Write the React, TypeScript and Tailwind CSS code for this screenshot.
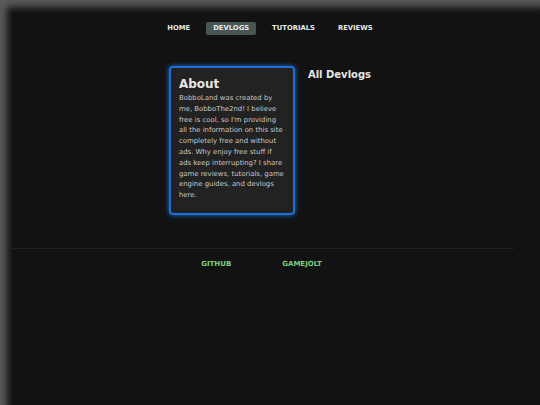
import React from "react";

const navItems = ["HOME", "DEVLOGS", "TUTORIALS", "REVIEWS"];

const App = () => {
  return (
    <div className="min-h-[405px] bg-[#121212] shadow-[inset_7px_7px_7px_#5a5a5a] font-['DejaVu_Sans',sans-serif] text-[#e6e6e6]">
      <nav className="flex justify-center items-center gap-[9px] pt-[22px]">
        {navItems.map((item) => (
          <a
            key={item}
            className={
              item === "DEVLOGS"
                ? "px-[7px] py-[3px] leading-[7px] rounded-[2px] bg-[#475655] text-[6.8px] font-bold text-[#e8e8e8]"
                : "px-[7px] py-[3px] leading-[7px] text-[6.8px] font-bold text-[#e8e8e8]"
            }
          >
            {item}
          </a>
        ))}
      </nav>

      <main className="flex justify-center items-start gap-[13px] mt-[31px]">
        <aside className="w-[126px] bg-[#222222] border-2 border-[#1f6fd6] rounded-[4px] shadow-[0_0_5px_#1f6fd6] px-[8px] pt-[9px] pb-[12px]">
          <h2 className="text-[12px] font-bold leading-[15px] text-[#e6e6e6]">About</h2>
          <p className="mt-[1px] text-[6.9px] leading-[10.8px] text-[#c8c8c8]">
            BobboLand was created by me, BobboThe2nd! I believe free is cool, so I'm providing all the
            information on this site completely free and without ads. Why enjoy free stuff if ads keep
            interrupting? I share game reviews, tutorials, game engine guides, and devlogs here.
          </p>
        </aside>
        <section className="pt-[2px]">
          <h1 className="text-[10px] font-bold leading-[14px] text-[#e6e6e6]">All Devlogs</h1>
        </section>
      </main>

      <footer className="mt-[33px] ml-[9px] mr-[26px] border-t border-[#222222] pt-[10px]">
        <div className="flex justify-center gap-[51px]">
          <a className="text-[7px] font-bold text-[#7fcf7f]">GITHUB</a>
          <a className="text-[7px] font-bold text-[#7fcf7f]">GAMEJOLT</a>
        </div>
      </footer>
    </div>
  );
};

export default App;
